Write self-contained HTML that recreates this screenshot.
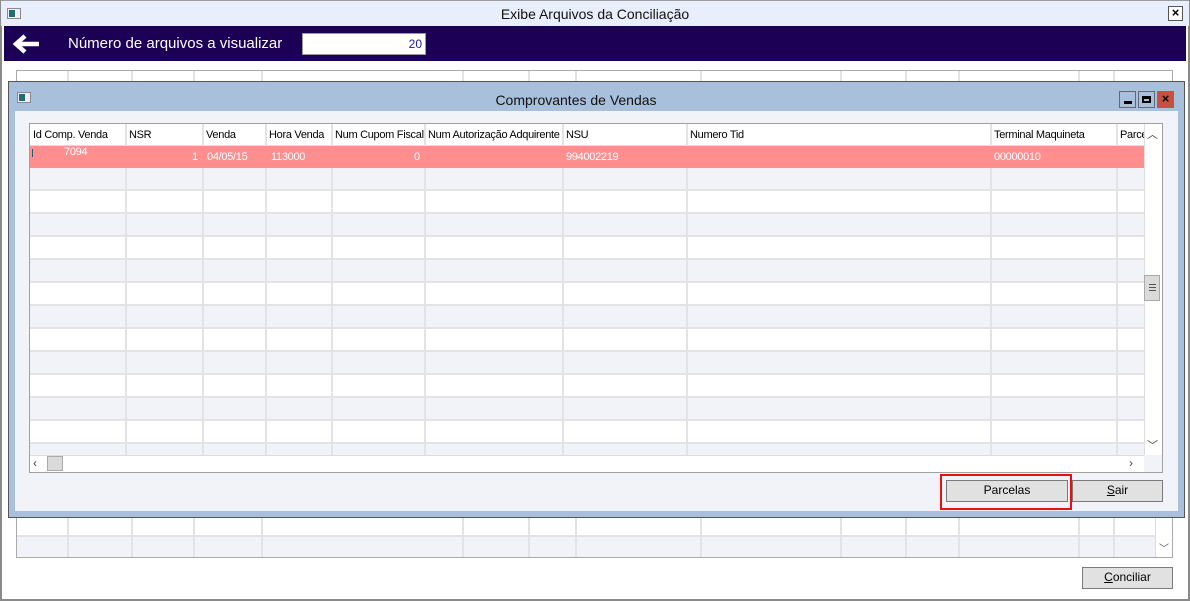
<!DOCTYPE html>
<html><head><meta charset="utf-8"><style>
*{margin:0;padding:0;box-sizing:border-box}
body{width:1190px;height:601px;overflow:hidden;background:#fff;font-family:"Liberation Sans",sans-serif;position:relative}
.a{position:absolute}
.t{font-size:11px;color:#000;white-space:nowrap;position:absolute;letter-spacing:-0.3px}
.vl{position:absolute;width:2px;background:#e3e3e6}
.btn{position:absolute;background:#e1e1e1;border:1px solid #7a7a7a;font-size:12px;text-align:center;line-height:19px;color:#000}
.appicon{position:absolute;width:14px;height:11px;border:1px solid #8a8a8a;background:#eef;}
.appicon::before{content:"";position:absolute;left:1px;top:1px;width:6px;height:7px;background:#1f6f72}
</style></head><body>
<div class="a" style="left:0;top:0;width:1190px;height:601px;border:2px solid #8a8a8a;border-top:1px solid #9a9a9a;background:#fff"></div>
<div class="a" style="left:1px;top:1px;width:1188px;height:25px;background:#e8eefc"></div>
<div class="appicon" style="left:7px;top:8px"></div>
<div class="a" style="left:0;width:1190px;top:6px;text-align:center;font-size:14px;color:#111">Exibe Arquivos da Conciliação</div>
<div class="a" style="left:1168px;top:6px;width:15px;height:15px;border:1px solid #555;background:#fff;font-size:13px;font-weight:bold;line-height:12px;text-align:center">×</div>
<div class="a" style="left:4px;top:26px;width:1182px;height:35px;background:#1b0055"></div>
<svg class="a" style="left:12px;top:33px" width="30" height="22"><path d="M4 11 H27 M13 3 L4 11 L13 19" stroke="#fff" stroke-width="4.5" fill="none"/></svg>
<div class="a" style="left:68px;top:35px;font-size:15px;color:#fff">Número de arquivos a visualizar</div>
<div class="a" style="left:302px;top:33px;width:124px;height:22px;background:#fff;border:1px solid #999;font-size:12px;color:#1b1b9a;text-align:right;padding-right:3px;line-height:20px">20</div>
<div class="a" style="left:16px;top:70px;width:1157px;height:488px;border:1px solid #aaa;background:#fff"></div>
<div class="vl" style="left:67px;top:71px;height:11px"></div><div class="vl" style="left:131px;top:71px;height:11px"></div><div class="vl" style="left:193px;top:71px;height:11px"></div><div class="vl" style="left:261px;top:71px;height:11px"></div><div class="vl" style="left:462px;top:71px;height:11px"></div><div class="vl" style="left:528px;top:71px;height:11px"></div><div class="vl" style="left:575px;top:71px;height:11px"></div><div class="vl" style="left:700px;top:71px;height:11px"></div><div class="vl" style="left:840px;top:71px;height:11px"></div><div class="vl" style="left:905px;top:71px;height:11px"></div><div class="vl" style="left:958px;top:71px;height:11px"></div><div class="vl" style="left:1078px;top:71px;height:11px"></div><div class="vl" style="left:1113px;top:71px;height:11px"></div>
<div class="a" style="left:17px;top:517px;width:1138px;height:18px;background:#fff"></div>
<div class="a" style="left:17px;top:535px;width:1138px;height:22px;background:#f1f3f8;border-top:2px solid #e3e3e6"></div>
<div class="vl" style="left:67px;top:517px;height:40px"></div><div class="vl" style="left:131px;top:517px;height:40px"></div><div class="vl" style="left:193px;top:517px;height:40px"></div><div class="vl" style="left:261px;top:517px;height:40px"></div><div class="vl" style="left:462px;top:517px;height:40px"></div><div class="vl" style="left:528px;top:517px;height:40px"></div><div class="vl" style="left:575px;top:517px;height:40px"></div><div class="vl" style="left:700px;top:517px;height:40px"></div><div class="vl" style="left:840px;top:517px;height:40px"></div><div class="vl" style="left:905px;top:517px;height:40px"></div><div class="vl" style="left:958px;top:517px;height:40px"></div><div class="vl" style="left:1078px;top:517px;height:40px"></div><div class="vl" style="left:1113px;top:517px;height:40px"></div>
<div class="a" style="left:1155px;top:517px;width:17px;height:40px;border-left:1px solid #ddd;background:#fff;font-size:10px;text-align:center;line-height:66px;color:#555">﹀</div>
<div class="btn" style="left:1082px;top:567px;width:91px;height:22px"><u>C</u>onciliar</div>
<div class="a" style="left:8px;top:81px;width:1177px;height:437px;border:1px solid #555;background:#a8c0dc"></div>
<div class="appicon" style="left:17px;top:92px;background:#eef"></div>
<div class="a" style="left:0;width:1152px;top:92px;text-align:center;font-size:14px;color:#111">Comprovantes de Vendas</div>
<div class="a" style="left:1119px;top:91px;width:17px;height:17px;border:1px solid #667;background:#a8c0dc"><div class="a" style="left:4px;top:9px;width:8px;height:3px;background:#000"></div></div>
<div class="a" style="left:1138px;top:91px;width:17px;height:17px;border:1px solid #667;background:#a8c0dc"><div class="a" style="left:3px;top:4px;width:9px;height:7px;border:2px solid #000;border-top-width:3px"></div></div>
<div class="a" style="left:1157px;top:91px;width:17px;height:17px;background:#c75040;color:#000;font-weight:bold;font-size:13px;text-align:center;line-height:16px">×</div>
<div class="a" style="left:15px;top:111px;width:1163px;height:400px;background:#f1f3f8"></div>
<div class="a" style="left:29px;top:123px;width:1134px;height:350px;border:1px solid #a0a0a0;background:#fff"></div>
<div class="a" style="left:30px;top:168px;width:1114px;height:287px;background:repeating-linear-gradient(#f1f3f8 0,#f1f3f8 21px,#e3e3e6 21px,#e3e3e6 23px,#fff 23px,#fff 44px,#e3e3e6 44px,#e3e3e6 46px)"></div>
<div class="a" style="left:30px;top:124px;width:1114px;height:22px;background:#fff;border-bottom:1px solid #ddd"></div>
<div class="vl" style="left:125px;top:124px;height:331px"></div><div class="vl" style="left:202px;top:124px;height:331px"></div><div class="vl" style="left:265px;top:124px;height:331px"></div><div class="vl" style="left:331px;top:124px;height:331px"></div><div class="vl" style="left:424px;top:124px;height:331px"></div><div class="vl" style="left:562px;top:124px;height:331px"></div><div class="vl" style="left:686px;top:124px;height:331px"></div><div class="vl" style="left:990px;top:124px;height:331px"></div><div class="vl" style="left:1116px;top:124px;height:331px"></div>
<div class="t" style="left:33px;top:129px">Id Comp. Venda</div>
<div class="t" style="left:129px;top:129px">NSR</div>
<div class="t" style="left:206px;top:129px">Venda</div>
<div class="t" style="left:269px;top:129px">Hora Venda</div>
<div class="t" style="left:335px;top:129px">Num Cupom Fiscal</div>
<div class="t" style="left:428px;top:129px">Num Autorização Adquirente</div>
<div class="t" style="left:566px;top:129px">NSU</div>
<div class="t" style="left:690px;top:129px">Numero Tid</div>
<div class="t" style="left:994px;top:129px">Terminal Maquineta</div>
<div class="t" style="left:1120px;top:129px;width:24px;overflow:hidden">Parcelas</div>
<div class="a" style="left:30px;top:146px;width:1114px;height:22px;background:#ff8f8f"></div>
<div class="a" style="left:32px;top:149px;width:1px;height:8px;background:#1f5f6f"></div>
<div class="t" style="left:64px;top:146px;color:#fff">7094</div>
<div class="t" style="left:192px;top:151px;color:#fff">1</div>
<div class="t" style="left:207px;top:151px;color:#fff">04/05/15</div>
<div class="t" style="left:271px;top:151px;color:#fff">113000</div>
<div class="t" style="left:414px;top:151px;color:#fff">0</div>
<div class="t" style="left:566px;top:151px;color:#fff">994002219</div>
<div class="t" style="left:994px;top:151px;color:#fff">00000010</div>
<div class="a" style="left:1144px;top:124px;width:18px;height:331px;background:#fff;border-left:1px solid #ddd"></div>
<div class="a" style="left:1144px;top:126px;width:17px;font-size:11px;text-align:center;color:#444">︿</div>
<div class="a" style="left:1144px;top:437px;width:17px;font-size:11px;text-align:center;color:#444">﹀</div>
<div class="a" style="left:1144px;top:275px;width:16px;height:26px;background:#dadada;border:1px solid #aaa"><div class="a" style="left:4px;top:8px;width:7px;height:7px;border-top:1px solid #555;border-bottom:1px solid #555"></div><div class="a" style="left:4px;top:11px;width:7px;height:1px;background:#555"></div></div>
<div class="a" style="left:30px;top:455px;width:1114px;height:17px;background:#fff;border-top:1px solid #ddd"></div>
<div class="a" style="left:33px;top:456px;font-size:12px;color:#444">‹</div>
<div class="a" style="left:47px;top:456px;width:16px;height:15px;background:#dadada;border:1px solid #aaa"></div>
<div class="a" style="left:1129px;top:456px;font-size:12px;color:#444">›</div>
<div class="a" style="left:1144px;top:455px;width:18px;height:17px;background:#f1f3f8"></div>
<div class="a" style="left:940px;top:474px;width:132px;height:36px;border:2px solid #e81010"></div>
<div class="btn" style="left:946px;top:480px;width:122px;height:22px">Parcelas</div>
<div class="btn" style="left:1072px;top:480px;width:91px;height:22px"><u>S</u>air</div>
</body></html>
